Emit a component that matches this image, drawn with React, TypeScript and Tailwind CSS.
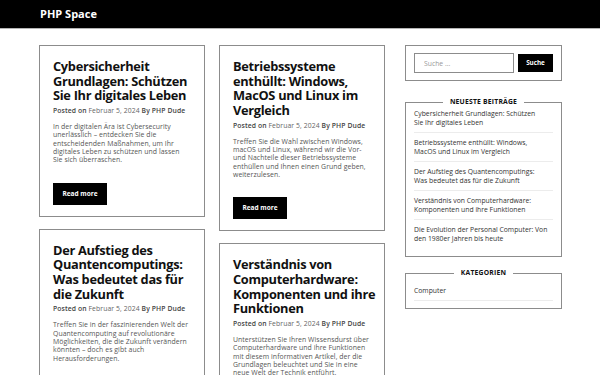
const posts = [
  {
    title: ["Cybersicherheit", "Grundlagen: Schützen", "Sie Ihr digitales Leben"],
    excerpt:
      "In der digitalen Ära ist Cybersecurity unerlässlich – entdecken Sie die entscheidenden Maßnahmen, um Ihr digitales Leben zu schützen und lassen Sie\u00A0sich überraschen.",
  },
  {
    title: ["Betriebssysteme", "enthüllt: Windows,", "MacOS und Linux im", "Vergleich"],
    excerpt:
      "Treffen Sie die Wahl zwischen Windows, macOS und Linux, während wir die Vor- und Nachteile dieser Betriebssysteme enthüllen und Ihnen einen Grund geben, weiterzulesen.",
  },
  {
    title: ["Der Aufstieg des", "Quantencomputings:", "Was bedeutet das für", "die Zukunft"],
    excerpt:
      "Treffen Sie in der faszinierenden Welt der Quantencomputing auf revolutionäre Möglichkeiten, die die Zukunft verändern könnten – doch es gibt auch Herausforderungen.",
  },
  {
    title: ["Verständnis von", "Computerhardware:", "Komponenten und ihre", "Funktionen"],
    excerpt:
      "Unterstützen Sie Ihren Wissensdurst über Computerhardware und ihre Funktionen mit diesem informativen Artikel, der die Grundlagen beleuchtet und Sie in eine neue Welt der Technik entführt.",
  },
];

const recent = [
  "Cybersicherheit Grundlagen: Schützen Sie\u00A0Ihr digitales Leben",
  "Betriebssysteme enthüllt: Windows, MacOS\u00A0und Linux im Vergleich",
  "Der Aufstieg des Quantencomputings: Was\u00A0bedeutet das für die Zukunft",
  "Verständnis von Computerhardware: Komponenten und ihre Funktionen",
  "Die Evolution der Personal Computer: Von den 1980er Jahren bis heute",
];

function PostCard({ title, excerpt }: { title: string[]; excerpt: string }) {
  return (
    <article className="w-[166px] border border-[#8c8c8c] px-[13px] pt-[13px] pb-[11px]">
      <h2 className="text-[12.8px] leading-[14.7px] font-bold tracking-[-0.3px] text-[#111] whitespace-nowrap">
        {title.map((line, i) => (
          <span key={i} className="block">
            {line}
          </span>
        ))}
      </h2>
      <p className="mt-[3px] text-[6.8px] leading-[10px] tracking-[0.1px] text-[#666] whitespace-nowrap">
        <span className="font-semibold text-[#444]">Posted on</span>{" "}
        <span>Februar 5, 2024</span>{" "}
        <span className="font-semibold text-[#444]">By PHP Dude</span>
      </p>
      <p className="mt-[7px] text-[6.9px] leading-[8.3px] tracking-[0.05px] text-[#555]">{excerpt}</p>
      <button className="mt-[18px] w-[54px] h-[22px] bg-black text-white text-[6.5px] font-bold">
        Read more
      </button>
    </article>
  );
}

function Widget({
  title,
  className,
  children,
}: {
  title: string;
  className: string;
  children: React.ReactNode;
}) {
  return (
    <fieldset className={"border border-[#8c8c8c] px-2 min-w-0 " + className}>
      <legend className="mx-auto px-[7px] text-[6.8px] font-bold text-[#111] uppercase tracking-[0.2px]">
        {title}
      </legend>
      {children}
    </fieldset>
  );
}

export default function App() {
  return (
    <div className="min-h-screen bg-white font-['Open_Sans',sans-serif]">
      <header className="h-[29px] bg-black border-b border-[#b4b4b4] flex items-center px-[40px]">
        <span className="text-white font-bold text-[11px]">PHP Space</span>
      </header>

      <div className="w-[522px] mx-auto mt-4 flex items-start gap-5">
        <main className="flex items-start gap-[14px]">
          <div className="flex flex-col gap-3">
            <PostCard {...posts[0]} />
            <PostCard {...posts[2]} />
          </div>
          <div className="flex flex-col gap-3">
            <PostCard {...posts[1]} />
            <PostCard {...posts[3]} />
          </div>
        </main>

        <aside className="w-[157px] flex flex-col">
          <div className="border border-[#8c8c8c] px-2 py-[7px] flex items-center gap-1">
            <input
              placeholder="Suche …"
              className="w-[100px] h-[20px] border border-[#8c8c8c] px-[9px] text-[6.8px] text-[#333] placeholder:text-[#999] outline-none"
            />
            <button className="w-[36px] h-[18px] bg-black text-white text-[6.3px] font-bold">Suche</button>
          </div>

          <div className="mt-[16px]">
            <Widget title="Neueste Beiträge" className="pb-[8px]">
              <ul className="-mt-[3px]">
                {recent.map((r, i) => (
                  <li
                    key={r}
                    className={
                      "py-[4.5px] text-[6.8px] leading-[9.5px] text-[#333] " +
                      (i < recent.length - 1 ? "border-b border-[#ececec]" : "")
                    }
                  >
                    {r}
                  </li>
                ))}
              </ul>
            </Widget>
          </div>

          <div className="mt-[11px]">
            <Widget title="Kategorien" className="pb-[7px]">
              <ul className="mt-[8px]">
                <li className="pb-[4px] text-[6.8px] leading-[9.5px] text-[#333] border-b border-[#ececec]">
                  Computer
                </li>
              </ul>
            </Widget>
          </div>
        </aside>
      </div>
    </div>
  );
}
